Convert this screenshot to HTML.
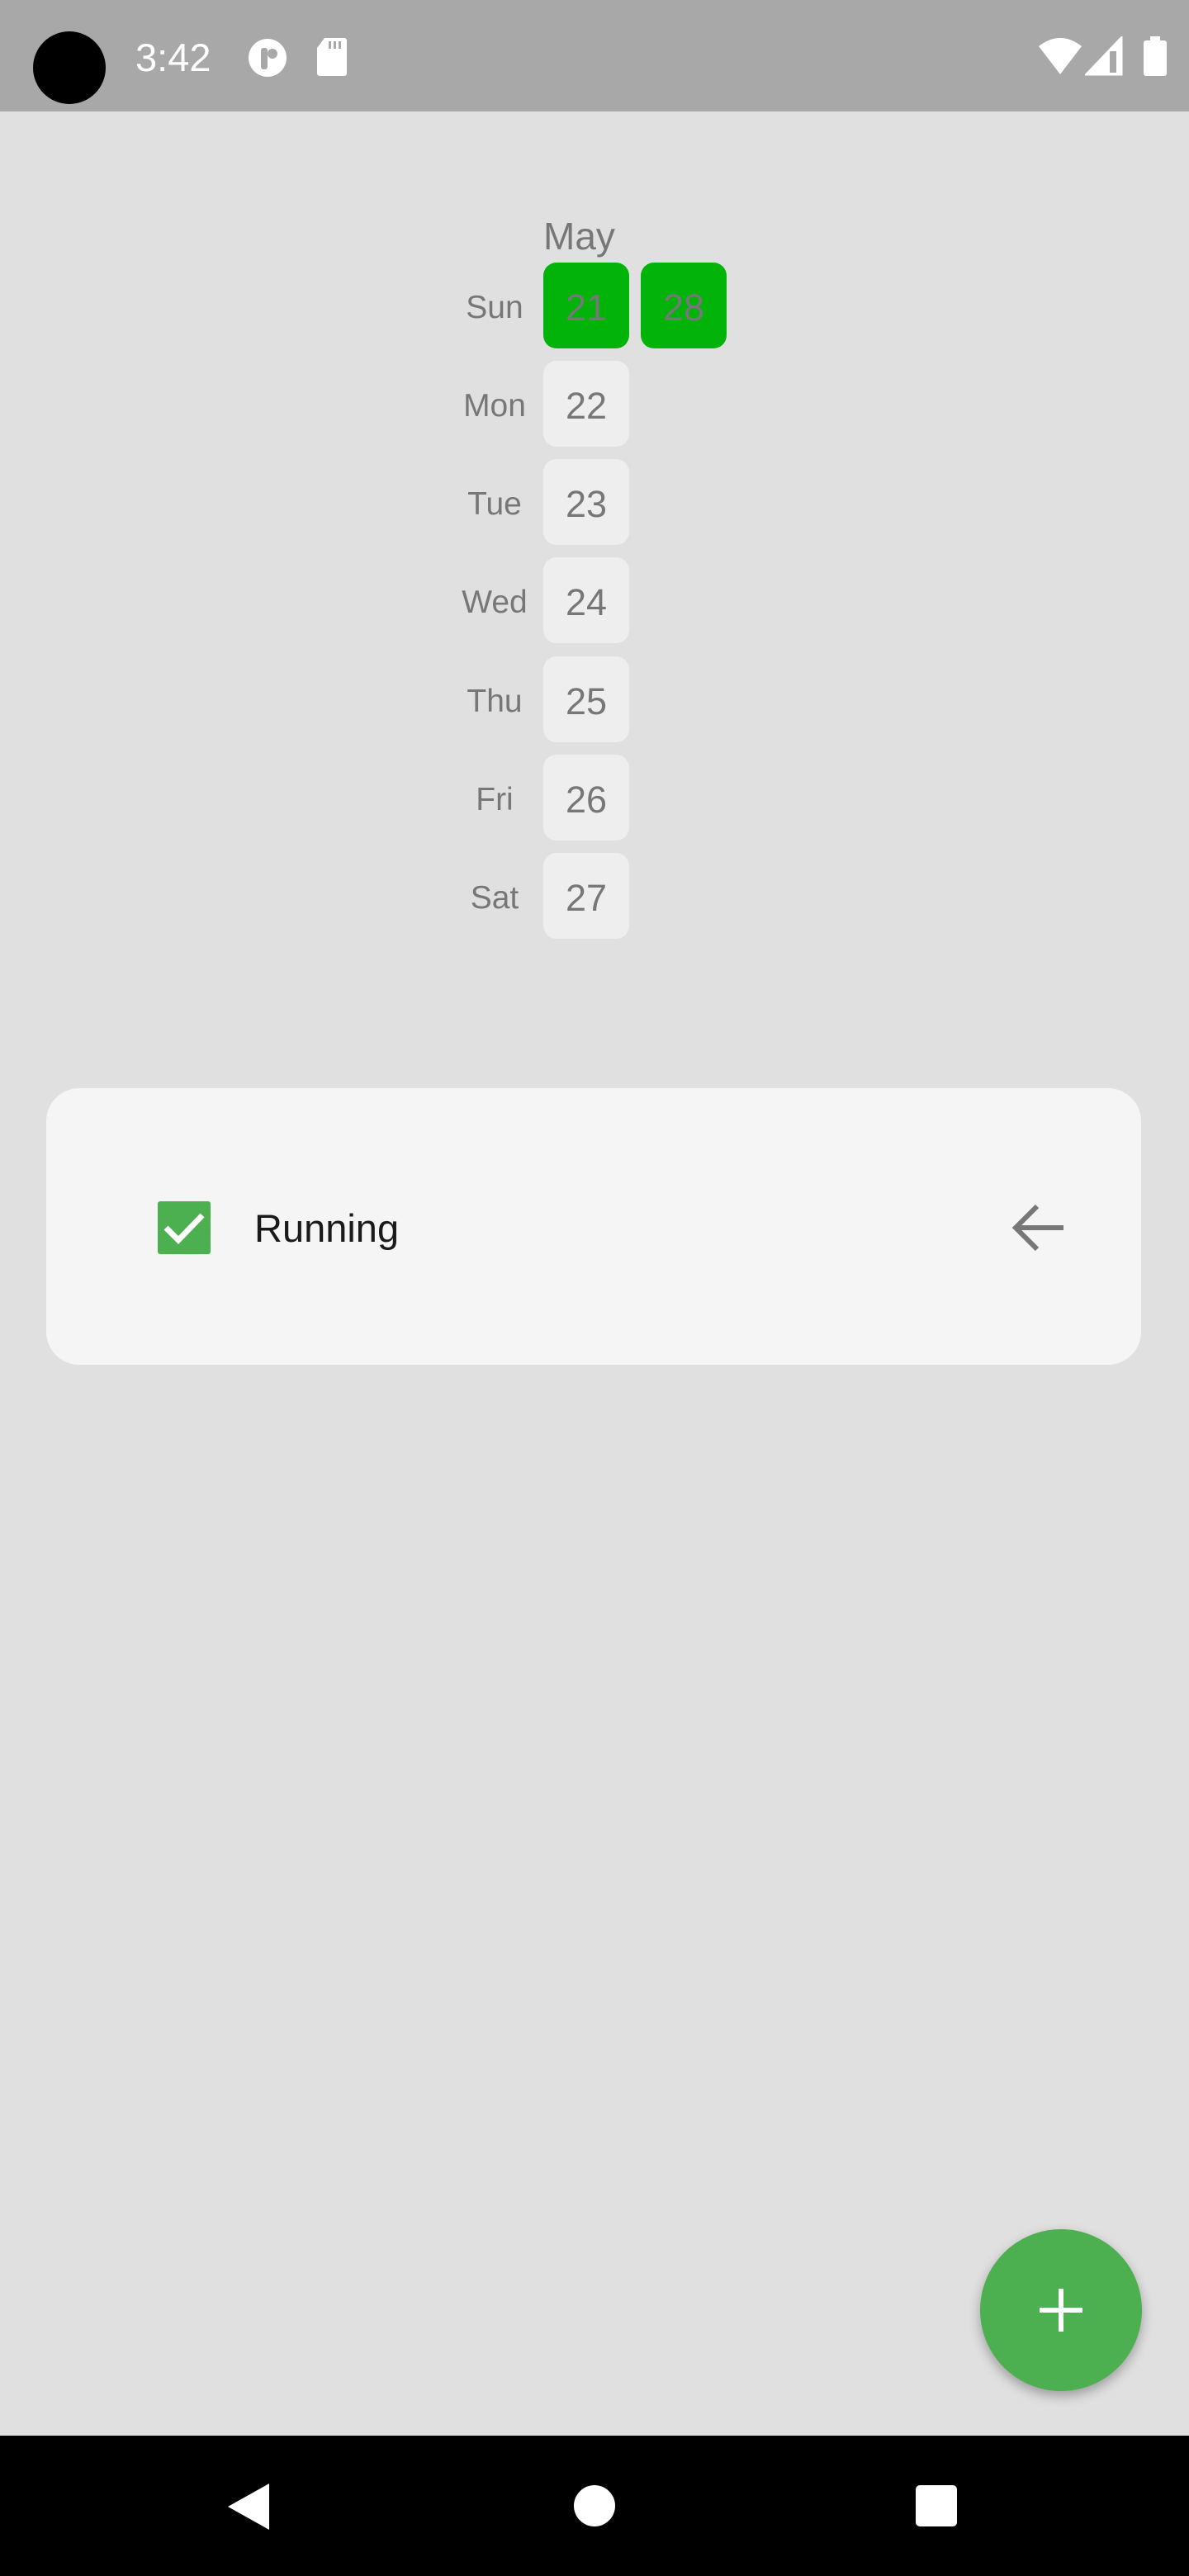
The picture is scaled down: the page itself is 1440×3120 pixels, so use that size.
<!DOCTYPE html>
<html><head><meta charset="utf-8"><style>
*{margin:0;padding:0;box-sizing:border-box}
body{width:1440px;height:3120px;background:#e0e0e0;position:relative;overflow:hidden;font-family:"Liberation Sans",Roboto,sans-serif}
.abs{position:absolute}
.status{left:0;top:0;width:1440px;height:135px;background:#a8a8a8}
.cell{position:absolute;width:104px;height:104px;border-radius:16px;background:#eeeeee;color:#777;font-size:45px;text-align:center;line-height:110px}
.g{background:#02b30a}
.lbl{position:absolute;width:200px;left:499px;text-align:center;color:#777;font-size:39px;line-height:110px}
</style></head><body>
<div class="abs status"></div>
<div class="abs" style="left:40px;top:38px;width:88px;height:88px;border-radius:50%;background:#000"></div>
<div class="abs" style="left:164px;top:44px;color:#fff;font-size:47px;line-height:52px">3:42</div>
<svg class="abs" style="left:298px;top:46px" width="52" height="48" viewBox="0 0 52 48"><circle cx="26" cy="24" r="23" fill="#fff"/><rect x="18" y="12" width="8" height="26" rx="3" fill="#a8a8a8"/><circle cx="32" cy="19" r="6" fill="#a8a8a8"/></svg>
<svg class="abs" style="left:383px;top:46px" width="38" height="46" viewBox="0 0 38 46"><path d="M10 0H34a3 3 0 0 1 3 3V43a3 3 0 0 1-3 3H4a3 3 0 0 1-3-3V12z" fill="#fff"/><rect x="15" y="4" width="3" height="9" fill="#a8a8a8"/><rect x="21" y="4" width="3" height="9" fill="#a8a8a8"/><rect x="27" y="4" width="3" height="9" fill="#a8a8a8"/></svg>
<svg class="abs" style="left:1256px;top:44px" width="56" height="48" viewBox="0 0 56 48"><path d="M28 46L2 12Q28-8 54 12Z" fill="#fff"/></svg>
<svg class="abs" style="left:1314px;top:44px" width="46" height="48" viewBox="0 0 46 48"><path d="M44 2V46H2Z" fill="#fff"/><rect x="30" y="18" width="8" height="26" fill="#a8a8a8"/><path d="M44 2V46H2Z" fill="none" stroke="#fff" stroke-width="3"/></svg>
<svg class="abs" style="left:1384px;top:44px" width="30" height="48" viewBox="0 0 30 48"><rect x="9" y="0" width="12" height="6" fill="#fff"/><rect x="1" y="5" width="28" height="43" rx="3" fill="#fff"/></svg>

<div class="abs" style="left:658px;top:256px;color:#777;font-size:46px;line-height:60px">May</div>
<div class="lbl" style="top:318px">Sun</div>
<div class="cell g" style="left:658px;top:318px">21</div>
<div class="cell g" style="left:776px;top:318px">28</div>
<div class="lbl" style="top:437px">Mon</div><div class="cell" style="left:658px;top:437px">22</div>
<div class="lbl" style="top:556px">Tue</div><div class="cell" style="left:658px;top:556px">23</div>
<div class="lbl" style="top:675px">Wed</div><div class="cell" style="left:658px;top:675px">24</div>
<div class="lbl" style="top:795px">Thu</div><div class="cell" style="left:658px;top:795px">25</div>
<div class="lbl" style="top:914px">Fri</div><div class="cell" style="left:658px;top:914px">26</div>
<div class="lbl" style="top:1033px">Sat</div><div class="cell" style="left:658px;top:1033px">27</div>

<div class="abs" style="left:56px;top:1318px;width:1326px;height:335px;border-radius:40px;background:#f5f5f5"></div>
<svg class="abs" style="left:191px;top:1455px" width="64" height="64" viewBox="0 0 64 64"><rect width="64" height="64" rx="3" fill="#4caf50"/><path d="M10 32L25 47L54 17" fill="none" stroke="#fff" stroke-width="7"/></svg>
<div class="abs" style="left:308px;top:1460px;font-size:47px;line-height:56px;color:#1a1a1a">Running</div>
<svg class="abs" style="left:1226px;top:1457px" width="64" height="60" viewBox="0 0 64 60"><path d="M62 30H6M30 4L4 30L30 56" fill="none" stroke="#777" stroke-width="6"/></svg>

<div class="abs" style="left:1187px;top:2700px;width:196px;height:196px;border-radius:50%;background:#4caf50;box-shadow:0 6px 14px rgba(0,0,0,.3)"></div>
<svg class="abs" style="left:1257px;top:2770px" width="56" height="56" viewBox="0 0 56 56"><path d="M28 2V54M2 28H54" stroke="#fff" stroke-width="6"/></svg>

<div class="abs" style="left:0;top:2950px;width:1440px;height:170px;background:#000"></div>
<svg class="abs" style="left:272px;top:3006px" width="56" height="60" viewBox="0 0 56 60"><path d="M54 2V58L4 30Z" fill="#fff"/></svg>
<div class="abs" style="left:695px;top:3010px;width:50px;height:50px;border-radius:50%;background:#fff"></div>
<div class="abs" style="left:1109px;top:3010px;width:50px;height:50px;border-radius:5px;background:#fff"></div>
</body></html>
